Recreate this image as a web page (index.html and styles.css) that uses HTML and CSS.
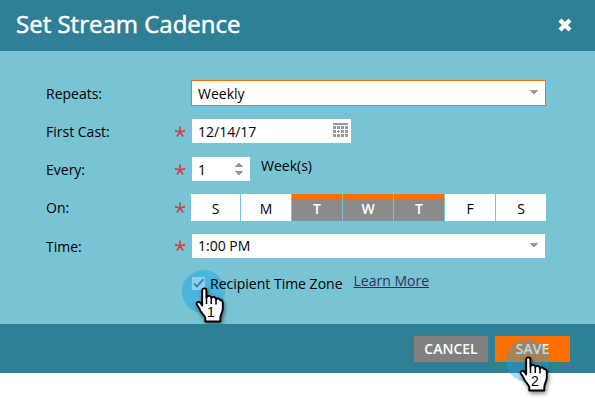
FILE: index.html
```html
<!DOCTYPE html>
<html lang="en">
<head>
<meta charset="utf-8">
<title>Set Stream Cadence</title>
<link rel="stylesheet" href="styles.css">
</head>
<body>
<svg class="defs" width="0" height="0" aria-hidden="true">
  <symbol id="star" viewBox="0 0 12 12"><path d="M6 6V.6M6 6 .9 4.6M6 6l5.100-1.400M6 6l-3.100 4.400M6 6l3.100 4.400" fill="none" stroke="#c9434b" stroke-width="1.700"/></symbol>
  <symbol id="caret" viewBox="0 0 8 4"><path d="M0 0h8v1H7v1H6v1H5v1H3V3H2V2H1V1H0z" fill="#999"/></symbol>
  <symbol id="hand" viewBox="0 0 30 37">
    <path d="M7.200 3.600C7.200.6 11.400.6 11.400 3.600V10.500C12.500 8 16 8.500 16.400 11.200 17.500 9 20.700 9.800 21 12.500 22.500 10.700 24.500 11.500 25 13 26.500 12.700 27.800 13.800 27.800 16V21.500C27.800 25.500 25.300 27.500 25.300 31V34.500H10.300V31C9 27.500 6 26 4.800 22.500 4 20.300 2.500 18.800 1.700 17.300.9 15 4 14.200 5.600 16L7.200 18.500z" fill="#fff" stroke="#000" stroke-width="1.9" stroke-linejoin="round"/>
    <path d="M11.500 10V17M16.300 11.200V17M21 12.500V17.500" fill="none" stroke="#000" stroke-width="1.500"/>
  </symbol>
</svg>
<div class="dialog">
  <header class="head">
    <h1>Set Stream Cadence</h1>
    <svg class="close" viewBox="0 0 14 14"><path d="M2 2l10 10M12 2L2 12" stroke="#fff" stroke-width="4.200"/></svg>
  </header>
  <main class="form">
    <div class="row">
      <label>Repeats:</label><span></span>
      <div class="field select focused">Weekly<svg class="caret"><use href="#caret"/></svg></div>
    </div>
    <div class="row">
      <label>First Cast:</label><svg class="star"><use href="#star"/></svg>
      <div class="field date">12/14/17
        <svg class="calendar" viewBox="0 0 15 14" fill="#999" shape-rendering="crispEdges"><path d="M0 0h15v2H0zM0 3h3v3H0zM4 3h3v3H4zM8 3h3v3H8zM12 3h3v3h-3zM0 7h3v3H0zM5 7h1v1h1v1H6v1H5V9H4V8h1zM8 7h3v3H8zM12 7h3v3h-3zM0 11h3v3H0zM4 11h3v3H4zM8 11h3v3H8zM12 11h3v3h-3z"/></svg>
      </div>
    </div>
    <div class="row">
      <label>Every:</label><svg class="star"><use href="#star"/></svg>
      <div class="field number">1
        <svg class="spinner" viewBox="0 0 8 12" fill="#999" shape-rendering="crispEdges"><path d="M0 4V3h1V2h1V1h1V0h2v1h1v1h1v1h1v1zM0 8h8v1H7v1H6v1H5v1H3v-1H2v-1H1V9H0z"/></svg>
      </div>
      <span class="unit">Week(s)</span>
    </div>
    <div class="row">
      <label>On:</label><svg class="star"><use href="#star"/></svg>
      <div class="days">
        <span>S</span><span>M</span><span class="on">T</span><span class="on">W</span><span class="on">T</span><span>F</span><span>S</span>
      </div>
    </div>
    <div class="row time">
      <label>Time:</label><svg class="star"><use href="#star"/></svg>
      <div class="field select">1:00 PM<svg class="caret"><use href="#caret"/></svg></div>
    </div>
    <div class="option">
      <svg class="check" viewBox="0 0 13 13"><path fill="#fff" d="M0 0h13v13H0z"/><path d="M2 6.500l3 3L11.500 2" fill="none" stroke="#666" stroke-width="2"/></svg>
      <div class="pointer first"><svg><use href="#hand"/></svg><b>1</b></div>
      <span class="zone">Recipient Time Zone</span>
      <a class="learn">Learn More</a>
    </div>
  </main>
  <footer class="foot">
    <button class="cancel">CANCEL</button>
    <button class="save">SAVE</button>
    <div class="pointer second"><svg><use href="#hand"/></svg><b>2</b></div>
  </footer>
</div>
</body>
</html>
```
FILE: styles.css
```css
* { box-sizing: border-box; }
body {
  margin: 0;
  min-height: 403px;
  background: #fff;
  color: #000;
  font: 14px/20px "Open Sans", "Noto Sans", sans-serif;
}
.defs { position: absolute; }
.dialog { width: 595px; height: 373px; display: flex; flex-direction: column; }
.head {
  height: 51px;
  padding: 0 23px 3px 16px;
  display: flex;
  align-items: center;
  justify-content: space-between;
  background: #308095;
}
.head h1 { margin: 0; color: #fff; font-size: 24px; line-height: 32px; font-weight: 400; -webkit-text-stroke: .5px #fff; }
.close { width: 14px; height: 14px; margin-top: 2px; }
.form { height: 273px; padding: 23px 0 0 46px; background: #79c4d4; }
.row { height: 38px; display: grid; grid-template-columns: 128px 17px auto 1fr; align-items: center; }
.row label { padding-top: 2px; }
.time label { padding-top: 4px; }
.star { width: 12px; height: 12px; margin-top: 2px; }
.field {
  height: 24px;
  margin-left: 1px;
  padding: 1px 6px 0;
  display: flex;
  align-items: center;
  justify-content: space-between;
  background: #fff;
}
.select { width: 353px; padding-right: 7px; }
.time .select { margin-top: 1px; }
.focused { width: 355px; height: 26px; margin-left: 0; border: 1px solid #f86f08; }
.caret { width: 8px; height: 4px; margin-top: -3px; }
.date { width: 159px; padding-right: 3px; }
.calendar { width: 15px; height: 14px; margin-top: -3px; }
.number { width: 58px; padding-right: 7px; }
.spinner { width: 8px; height: 12px; margin-top: -2px; }
.unit { margin: -7px 0 0 11px; }
.days { height: 27px; display: grid; grid-template-columns: 49px repeat(6, 50px); gap: 1px; margin-top: 1px; }
.days span { padding-top: 5px; text-align: center; background: #fff; }
.days .on { padding-top: 0; border-top: 5px solid #fc6f00; background: #8b8b8b; color: #fff; font-weight: 600; }
.option { position: relative; display: flex; height: 40px; padding: 10px 0 0 146px; }
.check { width: 13px; height: 13px; margin-top: 3px; }
.zone { position: relative; margin-left: 5px; }
.learn { margin: -3px 0 0 11px; color: #30305f; text-decoration: underline; }
.foot {
  position: relative;
  height: 49px;
  padding: 12px 25px 0;
  display: flex;
  justify-content: flex-end;
  gap: 7px;
  background: #308095;
}
.foot button { height: 26px; padding: 0; border: 0; color: #fff; font: 600 14px/26px "Open Sans", sans-serif; }
.cancel { width: 74px; background: #808080; }
.save { width: 75px; background: #fc6f00; }
.pointer {
  position: absolute;
  width: 43px;
  height: 43px;
  border-radius: 50%;
  background: rgba(30, 165, 230, .5);
}
.pointer svg { position: absolute; left: 13px; top: 17px; width: 30px; height: 37px; filter: drop-shadow(1px 2px 2px rgba(0, 0, 0, .5)); }
.pointer b { position: absolute; left: 25px; top: 32px; font: 14px/20px "Liberation Sans", sans-serif; }
.first { left: 136px; top: 6px; }
.second { left: 506px; top: 15px; background: rgba(20, 165, 240, .36); }
```
